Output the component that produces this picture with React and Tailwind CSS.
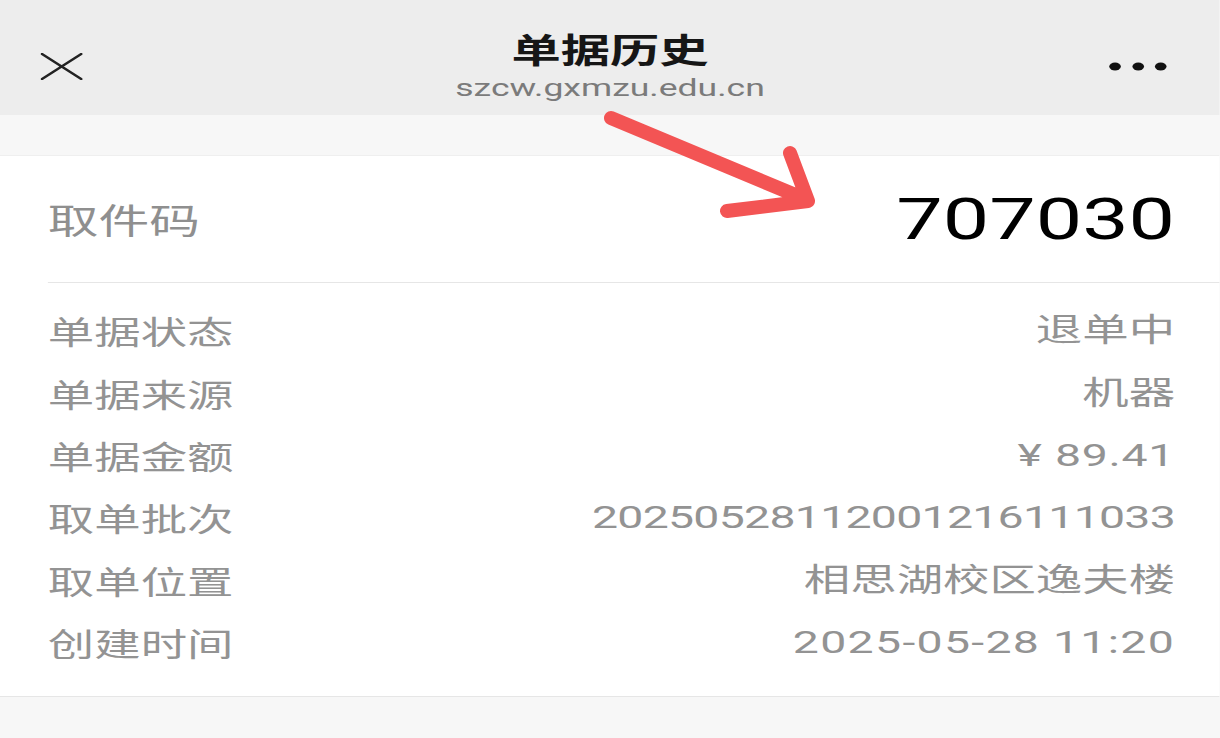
export default function App() {
  const rows = [
    { label: "单据状态", value: "退单中", cls: "" },
    { label: "单据来源", value: "机器", cls: "" },
    { label: "单据金额", value: "¥ 89.41", cls: "tracking-[0.5px]" },
    { label: "取单批次", value: "20250528112001216111033", cls: "tracking-[-0.5px]" },
    { label: "取单位置", value: "相思湖校区逸夫楼", cls: "" },
    { label: "创建时间", value: "2025-05-28 11:20", cls: "tracking-[0.9px]" },
  ];
  const font = { fontFamily: "Roboto, 'Noto Sans CJK SC', sans-serif" };
  return (
    <div className="relative w-[1220px] h-[738px] overflow-hidden bg-[#f7f7f7]" style={font}>
      <div className="w-[841.4px] h-[738px] origin-top-left scale-x-[1.45] flex flex-col">
        {/* header */}
        <div className="relative h-[115px] bg-[#ededed] flex flex-col items-center pt-[29px] shrink-0">
          <svg className="absolute left-[28px] top-[53px]" width="29" height="27" viewBox="0 0 29 27">
            <path d="M1 1 L28 26 M28 1 L1 26" stroke="#222" strokeWidth="2.2" strokeLinecap="round" fill="none" />
          </svg>
          <div className="text-[34px] leading-[40px] font-bold text-[#161616]" style={{ fontFamily: "'Noto Sans CJK SC', sans-serif" }}>单据历史</div>
          <div className="text-[24.5px] leading-[28px] mt-[5px] text-[#7b7b7b]">szcw.gxmzu.edu.cn</div>
          <svg className="absolute left-[764px] top-[62px]" width="42" height="9" viewBox="0 0 42 9">
            <ellipse cx="5" cy="4.5" rx="4" ry="4" fill="#111" />
            <ellipse cx="21" cy="4.5" rx="4" ry="4" fill="#111" />
            <ellipse cx="36.5" cy="4.5" rx="4" ry="4" fill="#111" />
          </svg>
        </div>
        <div className="h-[40px] shrink-0 bg-[#f7f7f7]" />
        {/* card */}
        <div className="bg-white border-t border-[#efefef] border-b border-b-[#e6e6e6] shrink-0">
          <div className="h-[126px] flex items-center justify-between pl-[33px] pr-[31px]">
            <span className="text-[35px] text-[#8f8f8f]" style={{ fontFamily: "'Noto Sans CJK SC', sans-serif" }}>取件码</span>
            <span className="text-[57px] text-black leading-none" style={{ fontFamily: "Roboto, sans-serif" }}>707030</span>
          </div>
          <div className="ml-[33px] border-t border-[#e6e6e6]" />
          <div className="pt-[16px] pb-[23px]">
            {rows.map((r) => (
              <div key={r.label} className="h-[62.4px] flex items-center justify-between pl-[33px] pr-[31px]">
                <span className="text-[32px] text-[#939393]" style={{ fontFamily: "'Noto Sans CJK SC', sans-serif" }}>{r.label}</span>
                <span className={"text-[32px] text-[#939393] " + r.cls}>{r.value}</span>
              </div>
            ))}
          </div>
        </div>
        <div className="flex-1 bg-[#f7f7f7]" />
      </div>
      {/* annotation arrow */}
      <svg className="absolute left-0 top-0 pointer-events-none" width="1220" height="738" viewBox="0 0 1220 738">
        <path d="M611 118 L805 199 M790 153 L808 201 L727 211" stroke="#f35454" strokeWidth="14" strokeLinecap="round" strokeLinejoin="round" fill="none" />
      </svg>
    </div>
  );
}
